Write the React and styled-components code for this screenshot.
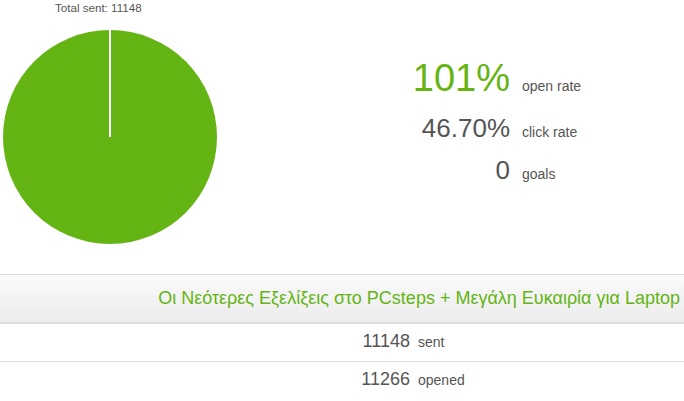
import React from "react";
import styled, { createGlobalStyle } from "styled-components";

const GlobalStyle = createGlobalStyle`
  body {
    margin: 0;
    background: #fff;
    font-family: "Liberation Sans", Arial, sans-serif;
    color: #555;
  }
`;

const stats = [
  { value: "101%", label: "open rate", big: true },
  { value: "46.70%", label: "click rate" },
  { value: "0", label: "goals" },
];

const rows = [
  { value: "11148", label: "sent" },
  { value: "11266", label: "opened" },
];

const App = () => {
  return (
    <>
      <GlobalStyle />
      <Page>
        <Overview>
          <ChartBox>
            <ChartTitle>Total sent: 11148</ChartTitle>
            <svg width="220" height="259" viewBox="0 0 220 259">
              <circle cx="110" cy="122" r="107" fill="#64b414" />
              <line x1="110" y1="14" x2="110" y2="122" stroke="#fff" strokeWidth="2" />
            </svg>
          </ChartBox>
          <StatsGrid>
            {stats.map((s) => (
              <React.Fragment key={s.label}>
                <StatValue big={s.big}>{s.value}</StatValue>
                <StatLabel>{s.label}</StatLabel>
              </React.Fragment>
            ))}
          </StatsGrid>
        </Overview>
        <CampaignHeader>
          Οι Νεότερες Εξελίξεις στο PCsteps + Μεγάλη Ευκαιρία για Laptop
        </CampaignHeader>
        {rows.map((r) => (
          <Row key={r.label}>
            <RowValue>{r.value}</RowValue>
            <RowLabel>{r.label}</RowLabel>
          </Row>
        ))}
      </Page>
    </>
  );
};

export default App;

const Page = styled.div`
  width: 684px;
`;

const Overview = styled.div`
  display: flex;
  height: 274px;
`;

const ChartBox = styled.div`
  width: 220px;
  display: flex;
  flex-direction: column;
  svg {
    display: block;
  }
`;

const ChartTitle = styled.div`
  height: 15px;
  line-height: 15px;
  font-size: 11.6px;
  color: #555;
  padding-left: 55px;
`;

const StatsGrid = styled.div`
  display: grid;
  grid-template-columns: 290px auto;
  column-gap: 12px;
  align-items: baseline;
  align-content: start;
  padding-top: 49px;
`;

const StatValue = styled.div`
  text-align: right;
  font-size: ${(props) => (props.big ? "38px" : "26px")};
  line-height: ${(props) => (props.big ? "58px" : "42px")};
  color: ${(props) => (props.big ? "#64b414" : "#555")};
`;

const StatLabel = styled.div`
  font-size: 14px;
  line-height: 1;
  color: #555;
`;

const CampaignHeader = styled.div`
  height: 47px;
  line-height: 47px;
  border-top: 1px solid #ddd;
  border-bottom: 2px solid #ddd;
  background: linear-gradient(to bottom, #fafafa, #ececec);
  text-align: right;
  padding-right: 4px;
  font-size: 18px;
  color: #64b414;
  white-space: nowrap;
`;

const Row = styled.div`
  display: grid;
  grid-template-columns: 410px 1fr;
  column-gap: 8px;
  align-items: baseline;
  height: 37px;
  border-bottom: 1px solid #ddd;
  &:last-child {
    border-bottom: none;
  }
`;

const RowValue = styled.div`
  text-align: right;
  font-size: 18px;
  line-height: 35px;
  color: #555;
`;

const RowLabel = styled.div`
  font-size: 14px;
  line-height: 1;
  color: #555;
`;
